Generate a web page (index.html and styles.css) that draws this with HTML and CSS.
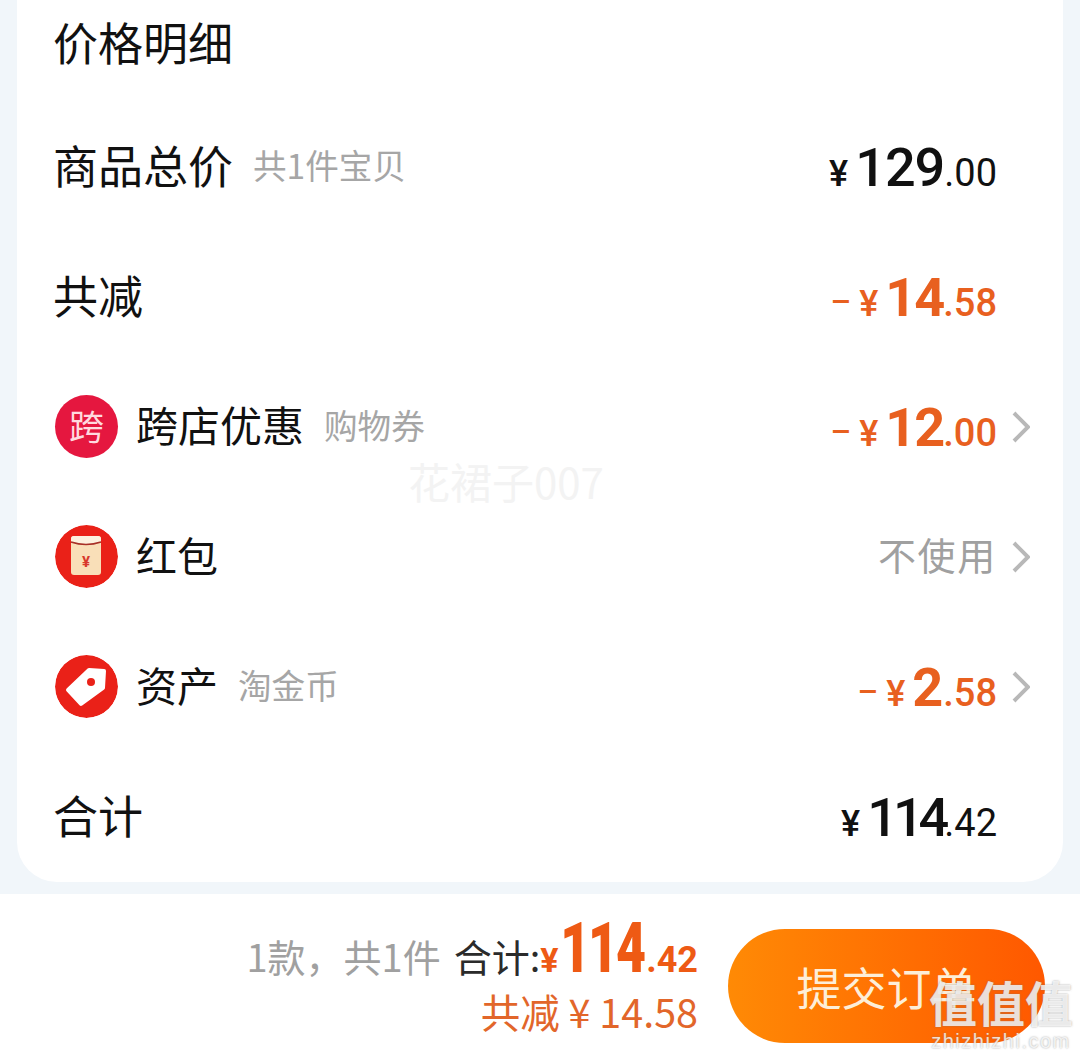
FILE: index.html
```html
<!DOCTYPE html>
<html>

<head>
    <title>价格明细</title>
    <link rel="stylesheet" href="styles.css">
</head>

<body>
    <section class="card">
        <h2 class="card-title">价格明细</h2>

        <div class="row">
            <span class="label">商品总价</span>
            <span class="sub">共1件宝贝</span>
            <span class="price no-arrow"><i class="yen">¥</i><b class="ls-1">129</b><small>.00</small></span>
        </div>

        <div class="row">
            <span class="label">共减</span>
            <span class="price orange no-arrow"><i class="minus">–</i><i class="yen">¥</i><b class="ls-2">14</b><small>.58</small></span>
        </div>

        <div class="row">
            <span class="badge badge-pink">跨</span>
            <span class="label label-small">跨店优惠</span>
            <span class="sub">购物券</span>
            <span class="price orange"><i class="minus">–</i><i class="yen">¥</i><b class="ls-2">12</b><small>.00</small></span>
            <svg class="arrow" viewBox="0 0 18 32"><path d="M2 2l14 14L2 30" /></svg>
        </div>

        <div class="row">
            <svg class="badge" viewBox="0 0 63 63">
                <circle cx="31.5" cy="31.5" r="31.5" fill="#ea2118" />
                <rect x="16" y="11" width="30" height="39" rx="3" fill="#f9dfb8" />
                <path d="M16 14a3 3 0 0 1 3-3h24a3 3 0 0 1 3 3v3q-15 5-30 0z" fill="#fdf1df" />
                <path d="M16 17q15 5 30 0" fill="none" stroke="#a83027" stroke-width="1.5" />
                <text x="31" y="42" class="packet-yen">¥</text>
            </svg>
            <span class="label label-tight">红包</span>
            <span class="unused">不使用</span>
            <svg class="arrow" viewBox="0 0 18 32"><path d="M2 2l14 14L2 30" /></svg>
        </div>

        <div class="row">
            <svg class="badge" viewBox="0 0 63 63">
                <circle cx="31.5" cy="31.5" r="31.5" fill="#ea2118" />
                <path d="M34 15L49 16L48 33L26 49L13 35Z" fill="#fff" stroke="#fff" stroke-width="4" stroke-linejoin="round" />
                <circle cx="36" cy="27" r="4" fill="#ea2118" />
            </svg>
            <span class="label label-tight">资产</span>
            <span class="sub">淘金币</span>
            <span class="price orange"><i class="minus">–</i><i class="yen">¥</i><b>2</b><small>.58</small></span>
            <svg class="arrow" viewBox="0 0 18 32"><path d="M2 2l14 14L2 30" /></svg>
        </div>

        <div class="row">
            <span class="label">合计</span>
            <span class="price no-arrow"><i class="yen">¥</i><b class="ls-4">114</b><small>.42</small></span>
        </div>
    </section>

    <footer class="footer">
        <div class="summary">
            <div class="total-line">
                <span class="count">1款，共1件</span>
                <span class="total-label">合计:</span>
                <span class="total-price"><i>¥</i><b>114</b><small>.42</small></span>
            </div>
            <div class="saved">共减 ¥ 14.58</div>
        </div>
        <button class="submit">提交订单</button>
    </footer>

    <div class="mark-user">花裙子007</div>
    <div class="mark-site">
        <div class="mark-logo">值值值</div>
        <div class="mark-url">zhizhizhi.com</div>
    </div>
</body>

</html>
```

FILE: styles.css
```css
* {
    box-sizing: border-box;
}

html,
body {
    margin: 0;
    height: 1061px;
    overflow: hidden;
}

body {
    position: relative;
    background-color: #f1f6fa;
    font-family: "Noto Sans CJK SC", sans-serif;
    color: #111;
}

.card {
    margin: 0 17px;
    height: 882px;
    padding: 0 33px 0 36px;
    background-color: #fff;
    border-radius: 0 0 40px 40px;
}

.card-title {
    margin: 0 0 18px;
    height: 84px;
    line-height: 84px;
    font-size: 45px;
    font-weight: 400;
}

.row {
    display: flex;
    align-items: center;
    height: 130px;
}

.label {
    margin-bottom: 6px;
    font-size: 45px;
    line-height: 1;
}

.label-small {
    font-size: 42px;
}

.label-tight {
    font-size: 41px;
}

.sub {
    margin-left: 20px;
    margin-bottom: 6px;
    font-size: 33.6px;
    color: #a6a6a6;
}

.badge {
    flex: none;
    width: 63px;
    height: 63px;
    margin: 0 18px 2px 2px;
    border-radius: 50%;
}

.badge-pink {
    display: flex;
    align-items: center;
    justify-content: center;
    padding-bottom: 3px;
    background-color: #e5173f;
    color: #ffd9df;
    font-size: 35px;
}

.packet-yen {
    font-family: "Roboto", sans-serif;
    font-size: 15px;
    font-weight: 700;
    fill: #d8382c;
    text-anchor: middle;
}

.price {
    margin-left: auto;
    font-family: "Roboto", sans-serif;
    font-weight: 500;
    white-space: nowrap;
}

.price i {
    font-style: normal;
}

.price b {
    font-size: 54px;
    font-weight: 500;
}

.price small {
    font-size: 38px;
    font-weight: 400;
}

.price .yen {
    margin-right: 7px;
    font-size: 36px;
}

.price .minus {
    margin-right: 8px;
    font-size: 32px;
    font-weight: 500;
    vertical-align: 3px;
}

.ls-1 {
    letter-spacing: -1px;
}

.ls-2 {
    letter-spacing: -2px;
}

.ls-4 {
    letter-spacing: -5px;
}

.no-arrow {
    margin-right: 33px;
}

.orange {
    color: #e8601f;
}

.orange b {
    font-weight: 700;
}

.orange small {
    font-weight: 500;
}

.unused {
    margin-left: auto;
    margin-bottom: 8px;
    font-size: 38px;
    letter-spacing: 1.7px;
    color: #a0a0a0;
}

.arrow {
    flex: none;
    width: 18px;
    height: 32px;
    margin-left: 15px;
    fill: none;
    stroke: #b8b8b8;
    stroke-width: 4;
}

.footer {
    display: flex;
    align-items: flex-start;
    justify-content: flex-end;
    gap: 30px;
    height: 167px;
    margin-top: 12px;
    padding-top: 13px;
    padding-right: 35px;
    background-color: #fff;
}

.summary {
    text-align: right;
}

.total-line {
    display: flex;
    align-items: baseline;
    justify-content: flex-end;
    height: 68px;
}

.count {
    margin-right: 13px;
    font-size: 38px;
    color: #a0a0a0;
}

.total-label {
    font-size: 38px;
    color: #2b2b2b;
}

.total-price {
    font-family: "Roboto", sans-serif;
    font-weight: 700;
    color: #ee5a14;
}

.total-price i {
    font-style: normal;
    font-size: 34px;
}

/* no narrow face installed, so the big digits get squeezed */
.total-price b {
    display: inline-block;
    margin-left: -28px;
    font-size: 70px;
    letter-spacing: -3px;
    transform: scaleX(0.74);
    transform-origin: right;
}

.total-price small {
    margin-left: 3px;
    font-size: 36px;
}

.saved {
    margin-top: 11px;
    font-size: 39.5px;
    line-height: 50px;
    color: #e2662a;
}

.submit {
    width: 317px;
    height: 114px;
    margin-top: 22px;
    border: none;
    border-radius: 57px;
    background: linear-gradient(90deg, #ff8a05, #ff5800);
    font-family: inherit;
    font-size: 45px;
    color: #fdeed8;
}

.mark-user {
    position: absolute;
    left: 408px;
    top: 450px;
    font-size: 42px;
    color: #f3f3f3;
}

.mark-site {
    position: absolute;
    left: 928px;
    top: 974px;
    width: 146px;
    text-align: center;
    color: rgba(255, 255, 255, 0.8);
    text-shadow: 0 0 2px rgba(120, 120, 120, 0.7);
}

.mark-logo {
    font-size: 48px;
    line-height: 54px;
    font-weight: 700;
}

.mark-url {
    font-family: "Liberation Sans", sans-serif;
    font-size: 20px;
    line-height: 26px;
    letter-spacing: 1.5px;
}
```
